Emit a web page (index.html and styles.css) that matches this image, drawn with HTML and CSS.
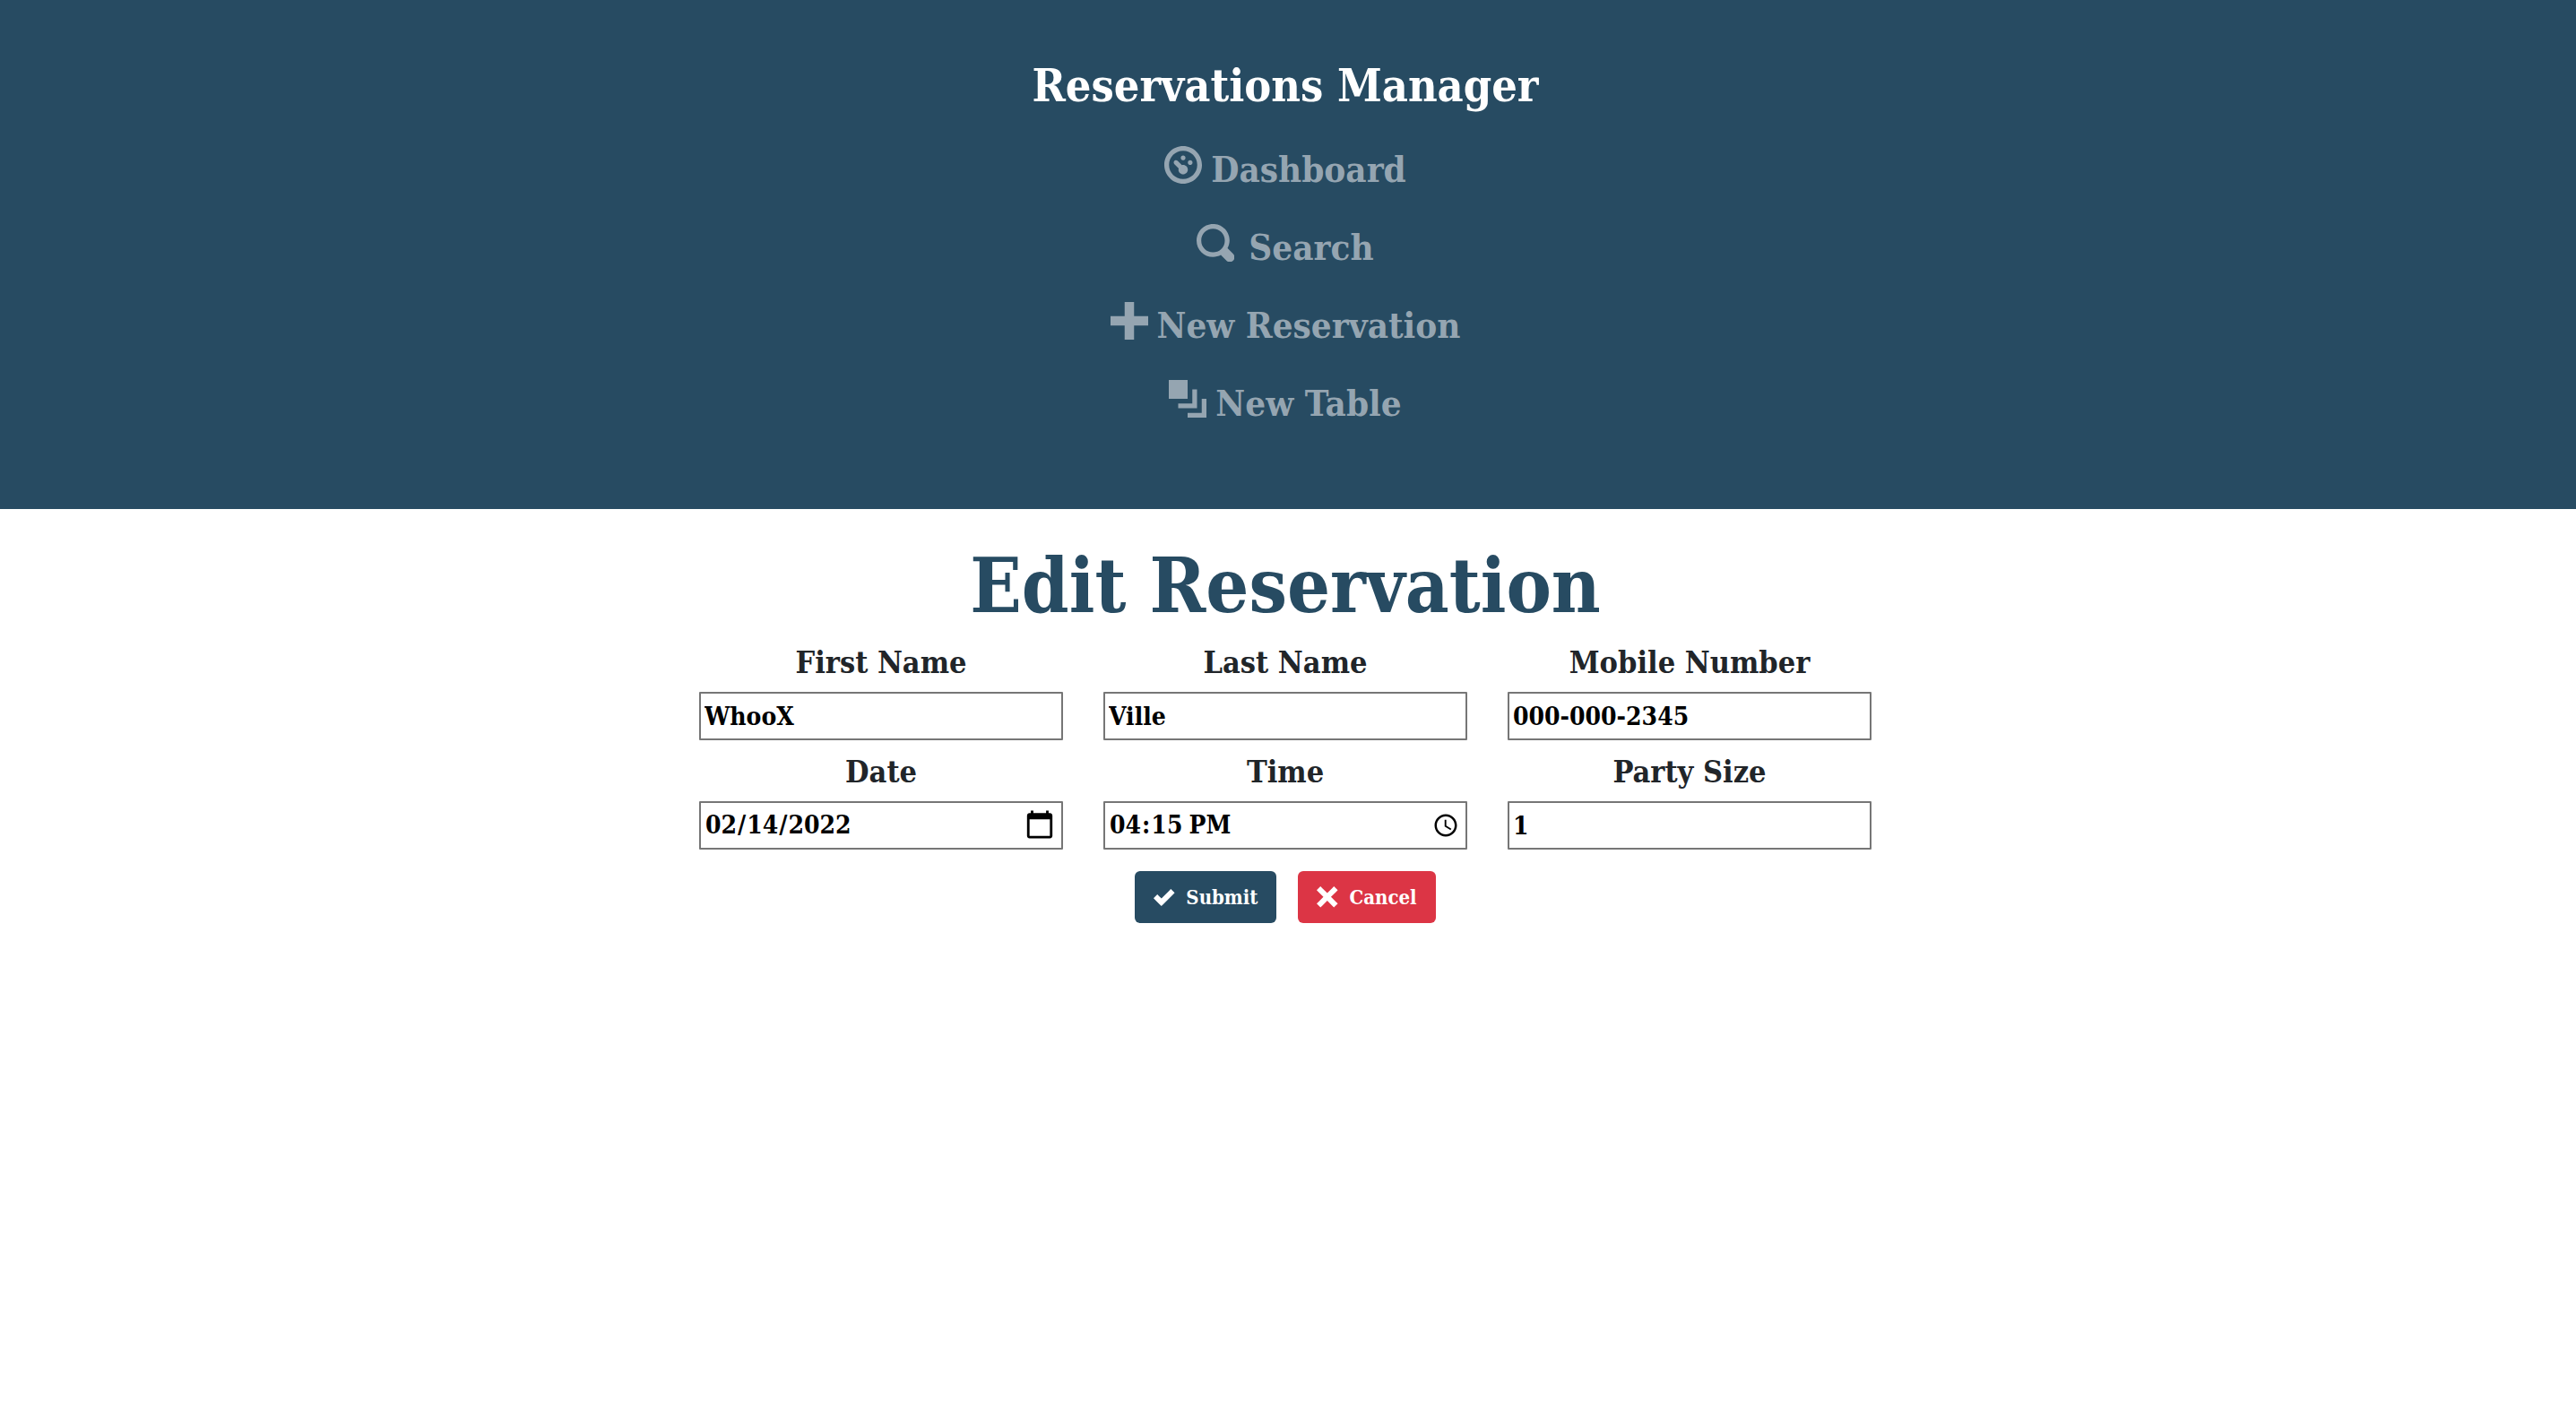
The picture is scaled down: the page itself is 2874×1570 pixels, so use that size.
FILE: index.html
```html
<!DOCTYPE html>
<html lang="en">
<head>
<meta charset="utf-8">
<title>Reservations Manager</title>
<link rel="stylesheet" href="styles.css">
</head>
<body>
<header class="menu">
  <a class="brand" href="#">Reservations Manager</a>
  <nav>
    <ul class="nav">
      <li><a class="nav-link" href="#dashboard"><svg class="icon" viewBox="0 0 8 8" aria-hidden="true"><path d="M4 0c-2.2 0-4 1.8-4 4s1.8 4 4 4 4-1.8 4-4-1.8-4-4-4zm0 1c1.66 0 3 1.34 3 3s-1.34 3-3 3-3-1.34-3-3 1.34-3 3-3zm0 1c-.28 0-.5.22-.5.5s.22.5.5.5.5-.22.5-.5-.22-.5-.5-.5zm-1.66 1a.5.5 0 0 0-.19.84l.91.91c-.02.08-.06.16-.06.25 0 .55.45 1 1 1s1-.45 1-1-.45-1-1-1c-.09 0-.17.04-.25.06l-.91-.91a.5.5 0 0 0-.44-.16.5.5 0 0 0-.06 0zm3.16 0c-.28 0-.5.22-.5.5s.22.5.5.5.5-.22.5-.5-.22-.5-.5-.5z"/></svg><span>Dashboard</span></a></li>
      <li><a class="nav-link nav-link-search" href="#search"><svg class="icon" viewBox="0 0 8 8" aria-hidden="true"><path d="M3.5 0c-1.93 0-3.5 1.57-3.5 3.5s1.57 3.5 3.5 3.5c.59 0 1.17-.14 1.66-.41a1 1 0 0 0 .13.13l1 1a1.02 1.02 0 1 0 1.44-1.44l-1-1a1 1 0 0 0-.16-.13c.27-.49.44-1.06.44-1.66 0-1.93-1.55-3.5-3.5-3.5zm0 1c1.39 0 2.5 1.11 2.5 2.5 0 .66-.24 1.27-.66 1.72-.01.01-.02.02-.03.03a1 1 0 0 0-.13.13c-.44.4-1.04.63-1.69.63-1.39 0-2.5-1.11-2.5-2.5s1.11-2.5 2.5-2.5z"/></svg><span>Search</span></a></li>
      <li><a class="nav-link" href="#new"><svg class="icon" viewBox="0 0 8 8" aria-hidden="true"><path d="M3 0v3h-3v2h3v3h2v-3h3v-2h-3v-3h-2z"/></svg><span>New Reservation</span></a></li>
      <li><a class="nav-link" href="#table"><svg class="icon" viewBox="0 0 8 8" aria-hidden="true"><path d="M0 0v4h4v-4h-4zm5 2v3h-3v1h4v-4h-1zm2 2v3h-3v1h4v-4h-1z"/></svg><span>New Table</span></a></li>
    </ul>
  </nav>
</header>
<main class="page">
  <h1 class="heading">Edit Reservation</h1>
  <form class="form">
    <div class="fields">
      <div class="field"><label for="first">First Name</label><input id="first" type="text" value="WhooX"></div>
      <div class="field"><label for="last">Last Name</label><input id="last" type="text" value="Ville"></div>
      <div class="field"><label for="mobile">Mobile Number</label><input id="mobile" type="tel" value="000-000-2345"></div>
      <div class="field"><label for="date">Date</label><input id="date" type="date" value="2022-02-14"></div>
      <div class="field"><label for="time">Time</label><input id="time" type="time" value="16:15"></div>
      <div class="field"><label for="size">Party Size</label><input id="size" type="number" value="1"></div>
    </div>
    <div class="actions">
      <button class="btn btn-primary" type="submit"><svg class="icon" viewBox="0 0 8 8" aria-hidden="true"><path transform="translate(0 1)" d="M6.41 0l-.69.72-2.78 2.78-.81-.78-.72-.72-1.41 1.41.72.72 1.5 1.5.69.72.72-.72 3.5-3.5.72-.72-1.41-1.41z"/></svg>Submit</button>
      <button class="btn btn-danger" type="button"><svg class="icon" viewBox="0 0 8 8" aria-hidden="true"><path d="M1.41 0l-1.41 1.41.72.72 1.78 1.81-1.78 1.78-.72.69 1.41 1.44.72-.72 1.81-1.81 1.78 1.81.69.72 1.44-1.44-.72-.69-1.81-1.78 1.81-1.81.72-.72-1.44-1.41-.69.72-1.78 1.78-1.81-1.78-.72-.72z"/></svg>Cancel</button>
    </div>
  </form>
</main>
</body>
</html>
```
FILE: styles.css
```css
* {
  box-sizing: border-box;
}

body {
  margin: 0;
  background: #fff;
  color: #212529;
  font-family: "Roboto Slab", "DejaVu Serif Condensed", "DejaVu Serif", serif;
  font-weight: 700;
}

.menu {
  display: flex;
  flex-direction: column;
  align-items: center;
  padding: 58px 6px 80px 0;
  background: #274b62;
}

.brand {
  color: #fff;
  font-size: 50px;
  line-height: 76px;
  text-decoration: none;
}

.nav {
  display: flex;
  flex-direction: column;
  align-items: center;
  margin: 6px 0 0;
  padding: 0;
  list-style: none;
}

.nav-link {
  display: flex;
  align-items: center;
  gap: 10px;
  height: 87px;
  color: #95a5b1;
  font-size: 40px;
  text-decoration: none;
}

.nav-link-search {
  gap: 16px;
}

.nav-link span {
  padding-top: 10px;
}

.icon {
  width: 42px;
  height: 42px;
  fill: currentColor;
}

.page {
  display: flex;
  flex-direction: column;
  align-items: center;
  padding: 32px 6px 0 0;
}

.heading {
  margin: 0 0 8px;
  color: #274b62;
  font-size: 84px;
  line-height: 108px;
}

.form {
  width: 100%;
  max-width: 1308px;
}

.fields {
  display: grid;
  grid-template-columns: repeat(3, minmax(0, 1fr));
  column-gap: 45px;
  row-gap: 12px;
}

.field {
  display: flex;
  flex-direction: column;
  gap: 10px;
  text-align: center;
}

.field label {
  font-size: 34px;
  line-height: 46px;
}

.field input {
  width: 100%;
  height: 54px;
  padding: 2px 4px;
  border: 2px solid #767676;
  border-radius: 1px;
  background: #fff;
  color: #000;
  font: 700 28px/40px "Roboto Slab", "DejaVu Serif Condensed", "DejaVu Serif", serif;
}

.field input::-webkit-calendar-picker-indicator {
  width: 30px;
  height: 30px;
}

.field input[type="date"]::-webkit-calendar-picker-indicator {
  width: 36px;
  height: 36px;
}

.actions {
  display: flex;
  justify-content: center;
  gap: 24px;
  margin-top: 24px;
}

.btn {
  display: flex;
  align-items: center;
  gap: 12px;
  height: 58px;
  padding: 0 21px;
  border: 0;
  border-radius: 6px;
  color: #fff;
  font: 700 22px/36px "Roboto Slab", "DejaVu Serif Condensed", "DejaVu Serif", serif;
}

.btn .icon {
  width: 24px;
  height: 24px;
}

.btn-primary {
  background: #274b62;
}

.btn-danger {
  background: #dc3545;
}
```
